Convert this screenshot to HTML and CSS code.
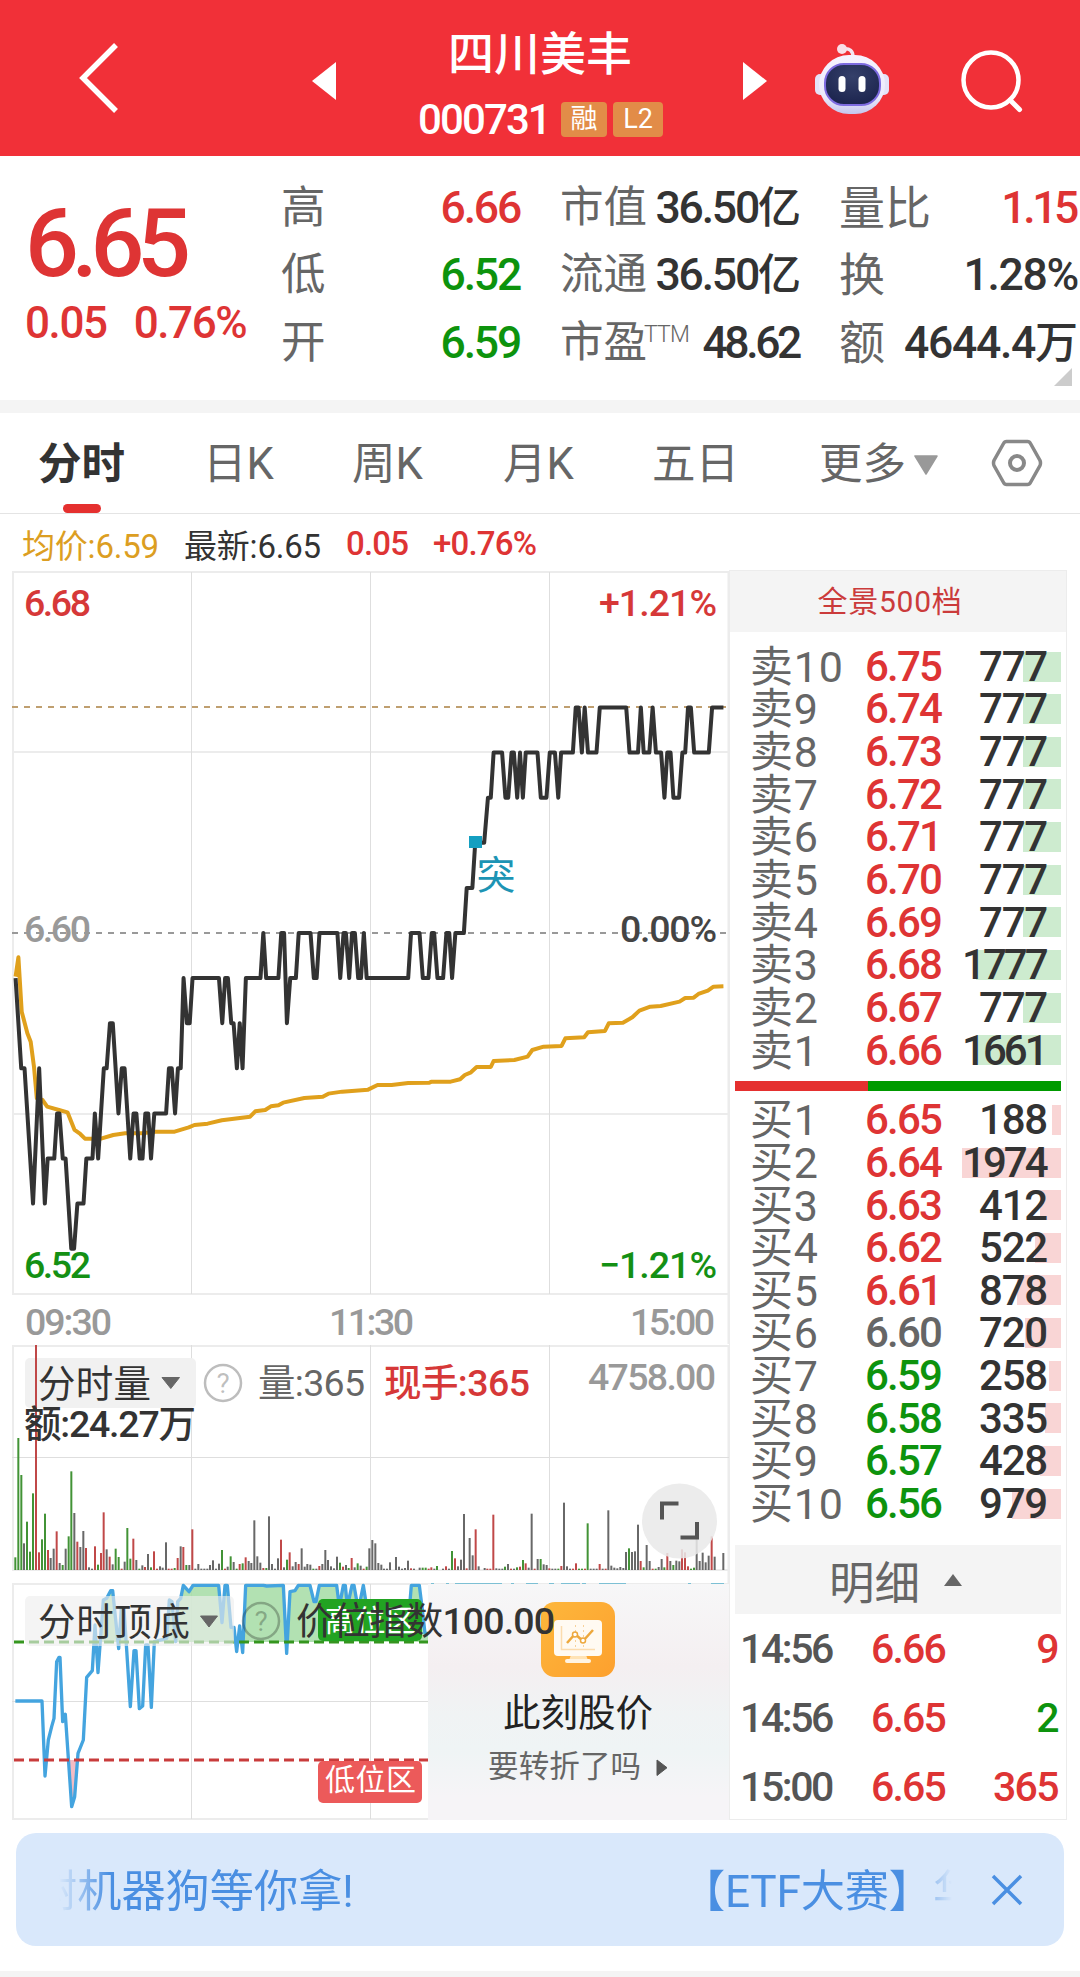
FILE: index.html
```html
<!DOCTYPE html>
<html lang="zh-CN">
<head>
<meta charset="utf-8">
<title>四川美丰 000731</title>
<link rel="stylesheet" href="styles.css">
</head>
<body>
<header class="top">
  <svg class="top-back" width="44" height="76" viewBox="0 0 44 76"><path d="M40 5L7 38l33 33" fill="none" stroke="#fff" stroke-width="5.500"/></svg>
  <svg class="top-prev" width="24" height="38" viewBox="0 0 24 38"><path d="M24 0v38L0 19z" fill="#fff"/></svg>
  <div class="top-title">
    <h1>四川美丰</h1>
    <div class="code"><span class="num">000731</span><b>融</b><b>L2</b></div>
  </div>
  <svg class="top-next" width="24" height="38" viewBox="0 0 24 38"><path d="M0 0v38l24-19z" fill="#fff"/></svg>
  <svg class="top-robot" width="76" height="72" viewBox="0 0 76 72">
    <defs>
      <linearGradient id="head" x1="0" y1="0" x2="0" y2="1"><stop offset="0" stop-color="#f6f3ff"/><stop offset=".7" stop-color="#eceafb"/><stop offset="1" stop-color="#c4c6ee"/></linearGradient>
      <radialGradient id="face" cx=".5" cy=".3" r=".8"><stop offset="0" stop-color="#35406a"/><stop offset="1" stop-color="#18204a"/></radialGradient>
    </defs>
    <path d="M39 14c0-6-3-9-10-8" fill="none" stroke="#f4e6f2" stroke-width="3.500"/>
    <circle cx="28" cy="6" r="5" fill="#f9dfe8"/>
    <rect x="1" y="31" width="12" height="21" rx="5" fill="#e4e2f8"/>
    <rect x="63" y="31" width="12" height="21" rx="5" fill="#e4e2f8"/>
    <rect x="5" y="12" width="66" height="59" rx="30" fill="url(#head)"/>
    <rect x="11" y="21" width="55" height="41" rx="19" fill="url(#face)" stroke="#7d6be0" stroke-width="2"/>
    <rect x="24.500" y="33" width="7" height="16" rx="3.500" fill="#fff"/>
    <rect x="44.500" y="33" width="7" height="16" rx="3.500" fill="#fff"/>
  </svg>
  <svg class="top-search" width="66" height="66" viewBox="0 0 66 66"><circle cx="32" cy="32" r="27.500" fill="none" stroke="#fff" stroke-width="4.500"/><path d="M51 52l9.500 9.500" stroke="#fff" stroke-width="5" stroke-linecap="round"/></svg>
</header>

<section class="quote">
  <div class="last">
    <div class="price num red">6.65</div>
    <div class="change num red"><span>0.05</span><span>0.76%</span></div>
  </div>
  <dl class="col col-a">
    <div><dt>高</dt><dd class="red">6.66</dd></div>
    <div><dt>低</dt><dd class="green">6.52</dd></div>
    <div><dt>开</dt><dd class="green">6.59</dd></div>
  </dl>
  <dl class="col col-b">
    <div><dt>市值</dt><dd>36.50<i>亿</i></dd></div>
    <div><dt>流通</dt><dd>36.50<i>亿</i></dd></div>
    <div><dt>市盈<sup>TTM</sup></dt><dd class="tight">48.62</dd></div>
  </dl>
  <dl class="col col-c">
    <div><dt>量比</dt><dd class="red tight">1.15</dd></div>
    <div><dt>换</dt><dd>1.28%</dd></div>
    <div><dt>额</dt><dd>4644.4<i>万</i></dd></div>
  </dl>
  <svg class="quote-more" width="18" height="18"><path d="M18 0v18H0z" fill="#ccc"/></svg>
</section>

<nav class="tabs">
  <span class="on">分时</span><span>日K</span><span>周K</span><span>月K</span><span>五日</span><span class="more">更多<svg width="24" height="20"><path d="M1 1h22L12 19z" fill="#999" stroke="#999" stroke-width="1.500" stroke-linejoin="round"/></svg></span>
  <svg class="gear" width="52" height="48" viewBox="0 0 52 48"><path d="M15.500 2.500h21q2 0 3 2l9.500 17q1 2.500 0 5l-9.500 17q-1 2-3 2h-21q-2 0-3-2L3 26.500q-1-2.500 0-5l9.500-17q1-2 3-2z" fill="none" stroke="#888" stroke-width="3.500"/><circle cx="26" cy="24" r="7" fill="none" stroke="#888" stroke-width="4"/></svg>
</nav>

<div class="info">
  <span class="gold">均价:6.59</span><span>最新:6.65</span><span class="red">0.05</span><span class="red">+0.76%</span>
</div>

<main class="main">
  <div class="charts">
    <svg width="729" height="774" viewBox="0 570 729 774">
      <g class="grid">
        <path d="M13 572V1295M728.500 572V1344M12 572H729M12 1294H729M12 752H729M12 1114H729" stroke-width="2"/>
        <path d="M191.500 572V1294M370.500 572V1294M549.500 572V1294" stroke="#dedede"/>
      </g>
      <path d="M12 707H726" stroke="#bf9f70" stroke-width="2" stroke-dasharray="6 6"/>
      <path d="M12 933H726" stroke="#999" stroke-width="2" stroke-dasharray="6 6"/>
      <g class="lbl">
        <text x="24" y="616" textLength="67" class="f-red">6.68</text>
        <text x="599" y="616" textLength="118" class="f-red">+1.21%</text>
        <text x="24" y="942" textLength="67" class="f-mute">6.60</text>
        <text x="24" y="1278" textLength="67" class="f-green">6.52</text>
        <text x="599" y="1278" textLength="118" class="f-green">−1.21%</text>
        <text x="25" y="1335" textLength="87" class="f-mute">09:30</text>
        <text x="329" y="1335" textLength="85" class="f-mute">11:30</text>
        <text x="630" y="1335" textLength="85" class="f-mute">15:00</text>
      </g>
      <polyline class="line" stroke="#e0a01c" transform="translate(0,880) scale(.4719,.3333)" points="33,290 39,232 46,395 58,460 65,485 72,560 78,655 90,660 100,680 125,690 143,697 158,750 170,762 180,776 214,776 240,765 265,760 300,760 330,755 370,755 400,742 412,735 440,731 470,721 530,710 541,694 562,690 574,679 590,676 600,668 645,654 684,650 696,641 725,635 780,629 800,615 830,615 865,609 910,608 915,605 955,605 975,598 985,585 998,577 1010,561 1040,561 1046,543 1090,540 1118,530 1128,510 1152,500 1190,498 1198,475 1238,472 1246,457 1282,453 1290,430 1320,428 1340,412 1355,392 1378,380 1400,378 1440,365 1452,354 1470,353 1480,342 1500,332 1512,320 1533,319"/>
      <polyline class="line" stroke="#333" transform="translate(0,933) scale(.4719,45.1)" points="33,1 45,3 52,3 70,6 83,3 95,6 101,5 115,5 121,4 126,4 133,5 139,5 151,7 157,7 164,6 177,6 183,5 196,5 201,4 208,5 220,3 226,3 233,2 239,2 251,4 258,3 264,3 276,5 283,4 289,4 296,5 302,5 308,4 314,4 320,5 327,4 352,4 358,3 364,3 371,4 377,3 383,3 389,1 396,2 402,2 408,1 464,1 471,2 477,1 483,1 490,2 495,2 502,3 508,2 514,3 521,1 552,1 558,0 564,1 590,1 596,0 602,0 608,2 615,1 627,1 633,0 658,0 665,1 671,1 677,0 715,0 721,1 728,0 733,0 740,1 746,0 752,0 759,1 765,1 771,0 777,1 865,1 871,0 889,0 896,1 908,1 915,0 920,0 927,1 939,1 946,0 952,0 958,1 965,0 983,0 989,-1 1001,-1 1007,-2 1026,-2 1034,-3 1040,-3 1046,-4 1064,-4 1071,-3 1077,-3 1084,-4 1089,-4 1096,-3 1102,-4 1108,-3 1114,-4 1139,-4 1146,-3 1158,-3 1165,-4 1176,-4 1183,-3 1189,-4 1214,-4 1220,-5 1226,-5 1233,-4 1239,-5 1246,-4 1264,-4 1271,-5 1327,-5 1334,-4 1352,-4 1358,-5 1364,-4 1376,-4 1383,-5 1390,-4 1401,-4 1408,-3 1414,-4 1421,-4 1427,-3 1439,-3 1446,-4 1452,-4 1458,-5 1464,-5 1471,-4 1502,-4 1509,-5 1533,-5"/>
      <text x="620" y="942" textLength="97" class="lbl f-dark">0.00%</text>
      <rect x="469" y="836" width="13" height="12" fill="#149fc1"/>
      <text x="476.500" y="888.500" class="tu">突</text>
    </svg>

    <svg width="729" height="239" viewBox="0 1344 729 239">
      <g class="grid">
        <path d="M13 1345V1571M728.500 1345V1583M12 1346H729M12 1570H729" stroke-width="2"/>
        <path d="M191.500 1345V1570M370.500 1345V1570M549.500 1345V1570M12 1457.500H729" stroke="#dedede"/>
      </g>
      <rect x="25" y="1358" width="171" height="50" rx="5" fill="#f1f1f1"/>
      <g id="volume" transform="translate(0,1570) scale(.33333,-.33333)"></g>
      <g class="legend">
        <text x="38" y="1396.500" textLength="113">分时量</text>
        <path d="M162 1377.500h17.500l-8.700 11z" fill="#666" stroke="#666" stroke-linejoin="round"/>
        <circle cx="223" cy="1383" r="18" class="help-ring"/><text x="223" y="1393" class="help">?</text>
        <text x="258" y="1396" textLength="107" class="f-gray">量:365</text>
        <text x="384" y="1396" textLength="146" class="f-red bold">现手:365</text>
        <text x="24" y="1437" textLength="172" class="bold">额:24.27万</text>
      </g>
      <text x="588" y="1390" textLength="128" class="lbl f-mute">4758.00</text>
      <circle cx="679.500" cy="1521" r="37.500" fill="#e9e9e9" fill-opacity=".86"/>
      <path d="M662 1519.500v-16h16.500M697 1522v15.500h-16.500" fill="none" stroke="#555" stroke-width="4"/>
    </svg>

    <svg width="729" height="237" viewBox="0 1583 729 237">
      <defs>
        <clipPath id="above"><rect x="0" y="0" width="1284" height="216"/></clipPath>
        <clipPath id="below"><rect x="0" y="570" width="1284" height="200"/></clipPath>
        <clipPath id="pane"><rect x="0" y="38" width="1284" height="740"/></clipPath>
        <linearGradient id="card" x1="0" y1="0" x2="0" y2="1"><stop offset="0" stop-color="#f7f7f8"/><stop offset=".35" stop-color="#f4eff1"/><stop offset=".55" stop-color="#f0f3f4"/><stop offset=".7" stop-color="#eff4f5"/><stop offset=".9" stop-color="#f6f4f7"/></linearGradient>
        <linearGradient id="orange" x1="0" y1="0" x2="1" y2="1"><stop offset="0" stop-color="#fdb73c"/><stop offset="1" stop-color="#fda02e"/></linearGradient>
      </defs>
      <g class="grid">
        <path d="M13 1583V1820M12 1584H729M12 1819H429" stroke-width="2"/>
        <path d="M191.500 1584V1819M370.500 1584V1819M12 1701.500H429" stroke="#dedede"/>
      </g>
      <g transform="translate(0,1570) scale(.33333)" clip-path="url(#pane)">
        <polygon id="high-fill" clip-path="url(#above)" fill="#a5dca5" fill-opacity=".85"/>
        <polygon id="low-fill" clip-path="url(#below)" fill="#f4bcc4"/>
        <polyline id="level" class="level"/>
      </g>
      <path d="M14 1642H428" stroke="#35961f" stroke-width="3" stroke-dasharray="10 5"/>
      <path d="M14 1760H428" stroke="#c93c3c" stroke-width="3" stroke-dasharray="10 5"/>
      <rect x="318" y="1599" width="104" height="42" rx="5" fill="#22a322"/>
      <text x="325" y="1631" textLength="91" class="zone">高位区</text>
      <rect x="318" y="1761" width="104" height="42" rx="5" fill="#ec5a5a"/>
      <text x="325" y="1790" textLength="91" class="zone">低位区</text>
      <rect x="428" y="1584" width="301" height="236" fill="url(#card)"/>
      <path d="M431 1583.500h3M446 1583.500h3M455 1583.500h47M511 1583.500h3M526 1583.500h12M549 1583.500h5M561 1583.500h19M582 1583.500h4M599 1583.500h27M688 1583.500h3M711 1583.500h13" stroke="#7dc0d4"/>
      <rect x="541" y="1602" width="74" height="75" rx="14" fill="url(#orange)"/>
      <path d="M571 1655h15l3 8h-21z" fill="#ffe3b5"/>
      <rect x="554" y="1620" width="48" height="36" rx="4" fill="#fffaf2"/>
      <rect x="565" y="1659" width="26" height="4" rx="2" fill="#fff4e2"/>
      <path d="M561.500 1626v23.500H595" fill="none" stroke="#fbdcae" stroke-width="1.500"/>
      <path d="M575.500 1625v24M583.500 1625v24" stroke="#f7d19a" stroke-dasharray="2 3"/>
      <path d="M567 1643l8-9 8 7 10-11" fill="none" stroke="#eda83d" stroke-width="2.500"/>
      <circle cx="575" cy="1634.500" r="2.500" fill="#fff" stroke="#eda83d" stroke-width="1.500"/><circle cx="583" cy="1640.500" r="2.500" fill="#fff" stroke="#eda83d" stroke-width="1.500"/>
      <rect x="25" y="1596" width="209" height="50" rx="5" fill="#eee" fill-opacity=".62"/>
      <g class="legend">
        <text x="38" y="1634.500" textLength="152">分时顶底</text>
        <path d="M200.500 1616h17l-8.500 11z" fill="#666" stroke="#666" stroke-linejoin="round"/>
        <circle cx="261" cy="1621" r="18" class="help-ring"/><text x="261" y="1631" class="help">?</text>
        <text x="296" y="1634" textLength="259" class="value">价位指数<tspan class="bold">100.00</tspan></text>
      </g>
      <text x="503" y="1726" textLength="150" class="ask">此刻股价</text>
      <text x="488" y="1776.500" textLength="153" class="ask-sub">要转折了吗</text>
      <path d="M657 1760v15.500l10-7.800z" fill="#555" stroke="#555" stroke-linejoin="round"/>
    </svg>
  </div>

  <aside class="book">
    <div class="book-head">全景500档</div>
    <div class="rows sell">
      <div><span>卖10</span><b class="red">6.75</b><em>777</em><u style="width:38px"></u></div>
      <div><span>卖9</span><b class="red">6.74</b><em>777</em><u style="width:38px"></u></div>
      <div><span>卖8</span><b class="red">6.73</b><em>777</em><u style="width:38px"></u></div>
      <div><span>卖7</span><b class="red">6.72</b><em>777</em><u style="width:38px"></u></div>
      <div><span>卖6</span><b class="red">6.71</b><em>777</em><u style="width:38px"></u></div>
      <div><span>卖5</span><b class="red">6.70</b><em>777</em><u style="width:38px"></u></div>
      <div><span>卖4</span><b class="red">6.69</b><em>777</em><u style="width:38px"></u></div>
      <div><span>卖3</span><b class="red">6.68</b><em class="wide">1777</em><u style="width:85px"></u></div>
      <div><span>卖2</span><b class="red">6.67</b><em>777</em><u style="width:38px"></u></div>
      <div><span>卖1</span><b class="red">6.66</b><em class="wide">1661</em><u style="width:83px"></u></div>
    </div>
    <div class="ratio"><i style="width:133px"></i></div>
    <div class="rows buy">
      <div><span>买1</span><b class="red">6.65</b><em>188</em><u style="width:9px"></u></div>
      <div><span>买2</span><b class="red">6.64</b><em class="wide">1974</em><u style="width:99px"></u></div>
      <div><span>买3</span><b class="red">6.63</b><em>412</em><u style="width:21px"></u></div>
      <div><span>买4</span><b class="red">6.62</b><em>522</em><u style="width:26px"></u></div>
      <div><span>买5</span><b class="red">6.61</b><em>878</em><u style="width:44px"></u></div>
      <div><span>买6</span><b class="gray">6.60</b><em>720</em><u style="width:36px"></u></div>
      <div><span>买7</span><b class="green">6.59</b><em>258</em><u style="width:12px"></u></div>
      <div><span>买8</span><b class="green">6.58</b><em>335</em><u style="width:16px"></u></div>
      <div><span>买9</span><b class="green">6.57</b><em>428</em><u style="width:21px"></u></div>
      <div><span>买10</span><b class="green">6.56</b><em>979</em><u style="width:49px"></u></div>
    </div>
    <div class="detail">明细<svg width="18" height="12"><path d="M9 0l9 12H0z" fill="#666"/></svg></div>
    <div class="trades">
      <div><span>14:56</span><b class="red">6.66</b><em class="red">9</em></div>
      <div><span>14:56</span><b class="red">6.65</b><em class="green">2</em></div>
      <div><span>15:00</span><b class="red">6.65</b><em class="red">365</em></div>
    </div>
  </aside>
</main>

<footer class="banner">
  <div class="marquee"><span>树机器狗等你拿!</span><span>【ETF大赛】</span><span>华</span></div>
  <svg width="32" height="32" viewBox="0 0 32 32"><path d="M2 2l28 28M30 2L2 30" stroke="#4a8fe2" stroke-width="3.500"/></svg>
</footer>
<script src="script.js"></script>
</body>
</html>
```

FILE: styles.css
```css
* { box-sizing: border-box; }
body {
  margin: 0; width: 1080px; height: 1977px; overflow: hidden; background: #fff; color: #333;
  font-family: Roboto, "Noto Sans CJK SC", sans-serif;
  display: flex; flex-direction: column;
}
body::after { content: ""; flex: 1; background: #f4f4f4; }
h1, dl, dt, dd { margin: 0; font-weight: 400; }
i, em { font-style: normal; }
u { text-decoration: none; }
svg { display: block; flex: none; }
.num { font-weight: 500; }
.red { color: #de3434; }
.green { color: #0d930d; }
.gray { color: #666; }
.gold { color: #dc9e22; }

.top { height: 156px; flex: none; background: #f13038; color: #fff; display: flex; }
.top-back { margin: 40px 0 0 76px; }
.top-prev { margin: 62px 0 0 192px; }
.top-title { width: 407px; padding-top: 26px; }
.top-title h1 { font-size: 46px; font-weight: 500; line-height: 56px; text-align: center; margin-left: 1px; }
.code { display: flex; align-items: center; height: 42px; margin-top: 16px; padding-left: 82px; }
.code .num { width: 143px; font-size: 42px; letter-spacing: -1.9px; }
.code b { height: 35px; line-height: 34px; width: 46px; border-radius: 4px; background: #e28c48; font-size: 27px; font-weight: 400; text-align: center; }
.code b + b { width: 50px; margin-left: 6px; }
.top-next { margin-top: 62px; }
.top-robot { margin: 43px 0 0 47px; }
.top-search { margin: 48px 0 0 69px; }

.quote { position: relative; height: 244px; flex: none; display: flex; }
.last { width: 281px; padding-left: 25px; }
.price { font-size: 95px; line-height: 100px; letter-spacing: -7.5px; margin-top: 38px; }
.change { font-size: 44px; line-height: 50px; letter-spacing: -1.4px; margin-top: 4px; display: flex; gap: 27px; }
.col { padding-top: 18px; }
.col > div { display: flex; justify-content: space-between; align-items: center; height: 67.5px; white-space: nowrap; }
.col dt { font-size: 44.5px; color: #666; line-height: 66px; }
.col dd { font-size: 44.5px; font-weight: 500; letter-spacing: -2.2px; line-height: 66px; }
.col dd i { font-size: 43px; letter-spacing: 0; }
.col .tight { letter-spacing: -3.4px; padding-right: 2px; }
.col-a { width: 239px; }
.col-b { width: 241px; margin-left: 40px; }
.col-b dt { font-size: 43.5px; }
.col-c { width: 239px; margin-left: 38px; }
.col-c dt { font-size: 46px; }
.col-c dd { letter-spacing: -1.3px; }
.col sup { font-size: 23px; vertical-align: 15px; line-height: 1; font-weight: 300; margin-left: -3px; letter-spacing: -.8px; }
.quote-more { position: absolute; left: 1054px; top: 212px; }

.tabs { height: 114px; flex: none; display: flex; align-items: center; border-top: 13px solid #f4f4f4; border-bottom: 1px solid #e4e4e4; font-size: 43.5px; color: #666; }
.tabs span { position: relative; line-height: 60px; margin-top: 3px; }
.tabs .on { margin-left: 38px; width: 165px; color: #333; font-weight: 700; }
.tabs .on::after { content: ""; position: absolute; left: 25px; top: 69px; width: 38px; height: 9px; border-radius: 4.5px; background: #e5302f; }
.tabs span:nth-child(2) { width: 149px; }
.tabs span:nth-child(3) { width: 151px; }
.tabs span:nth-child(4) { width: 149px; }
.tabs span:nth-child(5) { width: 167px; }
.tabs .more { width: 172px; display: flex; align-items: center; gap: 8px; }
.gear { margin-top: -1px; }

.info { height: 56px; flex: none; display: flex; align-items: center; padding: 3px 0 0 22px; font-size: 33px; font-weight: 500; letter-spacing: -.8px; }
.info span:nth-child(-n+2) { width: 162px; font-weight: 400; letter-spacing: -.2px; }
.info span:nth-child(3) { width: 87px; }

.main { display: flex; height: 1250px; flex: none; }
.charts { width: 729px; }
.grid { fill: none; stroke: #ececec; }
.lbl { font-size: 37.5px; font-weight: 500; }
.f-red { fill: #d63838; } .f-green { fill: #149014; } .f-mute { fill: #999; } .f-dark { fill: #444; } .f-gray { fill: #666; }
.line { fill: none; stroke-width: 4px; stroke-linejoin: round; vector-effect: non-scaling-stroke; }
.tu { font-size: 39px; fill: #1d94b4; }
.legend text { font-size: 37.5px; fill: #333; }
.legend .f-gray { fill: #666; }
.legend .f-red { fill: #d63838; }
.bold { font-weight: 500; }
.help-ring { fill: none; stroke: #000; stroke-opacity: .26; stroke-width: 2.5px; }
.legend .help { font-size: 28px; text-anchor: middle; fill: #000; fill-opacity: .26; }
.level { fill: none; stroke: #44a4df; stroke-width: 10px; stroke-linejoin: round; }
.zone { font-size: 30px; fill: #fff; }
.ask { font-size: 37.5px; fill: #222; }
.ask-sub { font-size: 30.5px; fill: #666; }

.book { width: 338px; height: 1250px; border: 1px solid #ececec; }
.book-head { height: 61px; line-height: 61px; background: #f4f4f4; text-align: center; font-size: 30px; letter-spacing: .7px; color: #cb3b3b; padding-right: 16px; }
.rows > div { position: relative; height: 42.65px; display: flex; align-items: center; line-height: 42px; white-space: nowrap; }
.rows.sell { padding-top: 13.5px; }
.rows.buy { padding-top: 8px; }
.rows span { width: 115px; margin-left: 20px; font-size: 43px; letter-spacing: .8px; color: #666; z-index: 1; }
.rows b { width: 90px; font-weight: 500; letter-spacing: -1.8px; font-size: 42px; z-index: 1; }
.rows em { width: 92px; text-align: right; font-size: 42px; font-weight: 500; letter-spacing: -1.2px; z-index: 1; }
.rows em.wide { letter-spacing: -3px; width: 90.5px; }
.rows u { position: absolute; right: 5px; top: 6px; height: 30px; background: #cdebcf; }
.buy u { background: #f9d5d5; }
.ratio { height: 10px; margin: 9px 5px 0; background: #009a00; }
.ratio i { display: block; height: 10px; background: #e5302f; }
.detail { height: 69px; margin: 20px 5px 0; background: #f4f4f4; display: flex; align-items: center; justify-content: center; gap: 24px; font-size: 45.5px; color: #666; padding-right: 5px; }
.trades > div { height: 69px; display: flex; align-items: center; font-size: 41px; font-weight: 500; padding-left: 10px; letter-spacing: -2.4px; }
.trades span { width: 131px; color: #555; }
.trades b { width: 90px; font-weight: 500; letter-spacing: -1.8px; }
.trades em { width: 97px; text-align: right; letter-spacing: -1.6px; }

.banner { margin: 13px 16px 25px; height: 113px; flex: none; border-radius: 20px; background: #d9e8fb; display: flex; align-items: center; }
.marquee { width: 893px; margin-left: 43px; padding-top: 4px; display: flex; overflow: hidden; white-space: nowrap; font-size: 44.2px; color: #4a8fe2; line-height: 70px; mask-image: linear-gradient(90deg, transparent, #000 50px, #000 850px, transparent 893px); }
.marquee span { flex: none; }
.marquee span:first-child { width: 648px; margin-left: -26px; }
.marquee span:nth-child(2) { width: 252px; letter-spacing: -.2px; }
.banner svg { margin-left: 39px; }
```

FILE: script.js
```js
const NS = 'http://www.w3.org/2000/svg';

// Per-minute volume: x position, colour (g down, r up, k flat), height.
const bars = `46g38 55g396 64g285 72k80 81g145 90g55 99g230 108r675 117r53 126g92 135g169 144r60 152k36 161k64 170r116 179k21 188g15 197k64 206g101 214g296 223k171 232r85 241k69 250k117 258r66 267k8 276k4 285r71 294g16 303r51 311r173 320k62 329r40 338k17 347g64 356g39 365r4 374k25 382g126 391g34 400r94 409k30 418g4 427k14 435r9 444k48 453g8 462r56 471r4 480k11 488k7 498k83 506r4 515r4 524g6 533r36 542k71 550r69 559g15 568k15 577r122 586k4 595k18 604k4 613k4 622k4 630k15 639k29 648k4 657k19 666g60 675r4 683k10 692g41 701k24 710g4 719r18 728g20 737r38 746k27 754k21 763k149 772k41 781k22 790r6 799g6 807k161 816k18 825k4 834k35 843r91 852k8 861g31 869r53 878k11 887k24 896r18 905k65 914k10 922k18 931k16 940g4 949k4 958r12 967k18 976k60 984k30 993k11 1002k5 1011k40 1020g22 1029r10 1038k15 1046g6 1055r36 1064k8 1073g20 1082k13 1091r4 1100g10 1108k65 1117k90 1126k80 1135k21 1144k16 1152k4 1161k4 1170k23 1188k39 1197k10 1206k4 1215k6 1224k28 1233r5 1242k4 1259k7 1268g7 1277g7 1286r4 1294r8 1303k4 1311g12 1329k4 1338r11 1347k4 1356g57 1365r35 1374k11 1383k31 1392k168 1400r5 1409k96 1418k44 1427r122 1436k11 1454k6 1462r4 1471r4 1480r166 1489k5 1498k4 1507k4 1515g10 1524k18 1533r4 1542k4 1551g8 1560r10 1569g30 1577r20 1586k7 1595k169 1604r4 1613k33 1622g33 1631k17 1640k15 1648r5 1657k4 1666k4 1675g4 1684r12 1692k202 1701k11 1710k4 1719r4 1728r20 1737g4 1746g4 1755r4 1763g140 1772k4 1781k4 1790k4 1799r18 1808k4 1817r4 1825k179 1834k13 1843k7 1852k5 1861k9 1870k6 1878k54 1887g65 1896k54 1905k56 1914k136 1922r27 1931g8 1940k75 1949k27 1958r4 1967g4 1976k9 1985k33 1993g8 2002r51 2011k27 2020g15 2029k28 2038k26 2046r62 2055r53 2064r11 2073g4 2082g7 2090k100 2099k27 2108k52 2117k23 2126k43 2135r101 2144k40 2170k51`;
const tone = { g: '#429336', r: '#c04848', k: '#686868' };
const volume = document.getElementById('volume');
for (const bar of bars.split(' ')) {
  const [, x, c, h] = bar.match(/(\d+)([grk])(\d+)/);
  const r = document.createElementNS(NS, 'rect');
  r.setAttribute('x', x - 3);
  r.setAttribute('y', 0);
  r.setAttribute('width', 6);
  r.setAttribute('height', h);
  r.setAttribute('fill', tone[c]);
  volume.appendChild(r);
}

// Price-position index, with the parts past either threshold filled in.
const level = '46,393 126,393 135,618 145,510 155,470 162,445 170,275 177,262 180,262 188,455 196,433 215,710 224,680 234,550 250,510 260,322 277,302 285,165 294,308 310,90 320,85 332,62 338,62 356,236 364,115 372,115 391,410 402,242 408,242 418,416 428,408 437,225 444,225 454,412 463,215 500,205 508,90 516,95 527,215 533,95 542,85 550,46 567,65 579,46 656,46 666,158 675,46 682,46 693,172 702,172 710,245 719,168 728,248 737,46 790,46 800,48 850,46 860,250 870,65 885,62 895,46 930,46 942,95 948,95 958,46 1010,46 1018,110 1030,46 1036,46 1042,110 1056,46 1062,46 1075,120 1090,46 1100,110 1110,190 1222,190 1234,46 1258,46 1266,110 1275,190 1284,190';
document.getElementById('level').setAttribute('points', level);
document.getElementById('high-fill').setAttribute('points', `46,216 ${level} 1284,216`);
document.getElementById('low-fill').setAttribute('points', `46,570 ${level} 1284,570`);
```
